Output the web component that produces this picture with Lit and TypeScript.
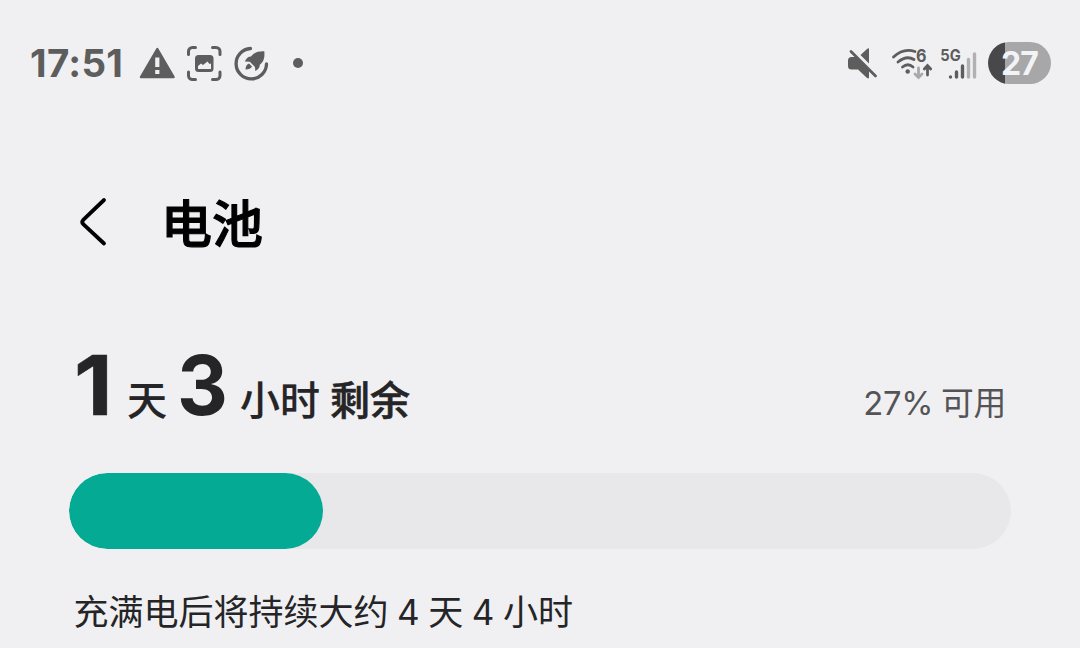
import { LitElement, html, css } from 'lit';
import { customElement, property } from 'lit/decorators.js';

@customElement('status-bar')
export class StatusBar extends LitElement {
    static styles = css`
        :host {
            display: flex;
            align-items: center;
            justify-content: space-between;
            height: 126px;
            padding: 0 29px 0 30px;
            box-sizing: border-box;
            color: #5d5d5e;
        }
        .group {
            display: flex;
            align-items: center;
        }
        .time {
            width: 108px;
            font-size: 38.5px;
            line-height: 46px;
            font-weight: 700;
            letter-spacing: 0.3px;
            white-space: nowrap;
        }
        svg {
            display: block;
            overflow: visible;
        }
        .warning,
        .capture {
            margin-right: 10px;
        }
        .dot {
            width: 10px;
            height: 10px;
            margin-left: 23px;
            border-radius: 50%;
            background: #5d5d5e;
        }
        .mute {
            margin-right: 12px;
        }
        .wifi {
            margin-right: 6px;
        }
        .signal {
            margin-right: 11px;
        }
        .battery {
            width: 63px;
            height: 42px;
            border-radius: 21px;
            background: linear-gradient(90deg, #48484a 27%, #a7a7a9 27%);
            color: #f3f3f5;
            font-size: 32px;
            line-height: 43px;
            font-weight: 700;
            letter-spacing: -0.8px;
            text-align: center;
        }
        text {
            font-family: Inter, sans-serif;
            font-weight: 700;
            fill: currentColor;
        }
    `;

    @property({ type: Number }) level = 0;

    render() {
        return html`
            <div class="group">
                <span class="time">17:51</span>
                <svg class="warning" width="38" height="42" viewBox="138 42 38 42">
                    <path d="M157.3 49L173.6 77H141Z" fill="currentColor" stroke="currentColor" stroke-width="2.4" stroke-linejoin="round"/>
                    <path d="M157.3 57.5v9.5M157.3 70v4" stroke="#f0f0f2" stroke-width="4.2"/>
                </svg>
                <svg class="capture" width="36" height="42" viewBox="186 42 36 42">
                    <path d="M188.5 54.5v-3a4 4 0 0 1 4-4h3M212.5 47.5h3.5a4 4 0 0 1 4 4v3M220 72v3.5a4 4 0 0 1-4 4h-3.5M195.5 79.5h-3a4 4 0 0 1-4-4v-3.5" fill="none" stroke="currentColor" stroke-width="3" stroke-linecap="round"/>
                    <rect x="195" y="55" width="18.5" height="17" rx="3.5" fill="currentColor"/>
                    <path d="M198 69v-3l3-2.5 2 1.5 4.5-3.5 2 2.5 1.5-.5v5.5Z" fill="#f0f0f2"/>
                </svg>
                <svg width="38" height="42" viewBox="232 42 38 42">
                    <path d="M250.5 48.5A15.2 15.2 0 1 0 266.5 64" fill="none" stroke="currentColor" stroke-width="3.3" stroke-linecap="round"/>
                    <path d="M264.3 51.3c-6-.3-10 1.200-13.3 5.200-2.800 0-4.500 1.500-6.200 5l5 .3 5.200 5.200 .3 4c3-1.500 4.500-3.500 4.500-6.200 4.200-3.300 5-7.300 4.500-13.500Z" fill="currentColor"/>
                    <path d="M249 63.5l3 3c-1 2-3 3-6.500 3 0-3.500 1.500-5.500 3.500-6Z" fill="currentColor"/>
                </svg>
                <span class="dot"></span>
            </div>
            <div class="group">
                <svg class="mute" width="32" height="42" viewBox="847 42 32 42">
                    <path d="M869 49v14.5l-8.500-8.500 6-5.500q2.500-2 2.500-.5ZM851.500 57h4.500l13 13v7q0 2.500-2.500.5l-8.500-8h-6.500q-3.500 0-3.500-3.500v-5.500q0-3.500 3.500-3.500Z" fill="currentColor"/>
                    <path d="M851 51.5L875.5 76" stroke="currentColor" stroke-width="2.8" stroke-linecap="round"/>
                </svg>
                <svg class="wifi" width="43" height="42" viewBox="891 42 43 42">
                    <g fill="none" stroke="currentColor" stroke-width="2.8" stroke-linecap="round">
                        <path d="M893.5 57Q903.5 47.500 915 51.500M898 62Q906.500 55 914 59.500M902.500 67Q908 62.500 913 67"/>
                        <path d="M927.5 75v-9M924.3 69l3.200-3.500 3.200 3.500"/>
                        <path d="M918.5 68v9M915 74l3.500 3.500 3.500-3.500" stroke="#a9a9ab"/>
                    </g>
                    <circle cx="907.7" cy="71.5" r="2.2" fill="currentColor"/>
                    <text x="916" y="61.8" font-size="17.5" textLength="10.5" lengthAdjust="spacingAndGlyphs">6</text>
                </svg>
                <svg class="signal" width="37" height="42" viewBox="940 42 37 42">
                    <text x="940.3" y="61" font-size="16.5" textLength="20.5" lengthAdjust="spacingAndGlyphs">5G</text>
                    <g fill="none" stroke="currentColor" stroke-width="3.4" stroke-linecap="round">
                        <path d="M950.5 77v.1M956.5 77v-5M962.5 77v-11"/>
                        <path d="M968.5 77V59.5M974.5 77V54" stroke="#b1b1b3"/>
                    </g>
                </svg>
                <span class="battery">${this.level}</span>
            </div>
        `;
    }
}

@customElement('battery-bar')
export class BatteryBar extends LitElement {
    static styles = css`
        :host {
            display: block;
            height: 76px;
            border-radius: 38px;
            background: #e8e8ea;
            overflow: hidden;
        }
        .fill {
            height: 100%;
            border-radius: 38px;
            background: #05aa95;
        }
    `;

    @property({ type: Number }) level = 0;

    render() {
        return html`<div class="fill" style="width: ${this.level}%"></div>`;
    }
}

@customElement('app-root')
export class AppRoot extends LitElement {
    static styles = css`
        :host {
            display: block;
            height: 648px;
            overflow: hidden;
            background: #f0f0f2;
            color: #252527;
            font-family: Inter, 'Noto Sans CJK SC', sans-serif;
        }
        .header {
            display: flex;
            align-items: center;
            height: 60px;
            padding: 66px 0 0 78px;
        }
        .header svg {
            display: block;
            margin-right: 53px;
        }
        h1 {
            margin: 0;
            padding-top: 6px;
            color: #000;
            font-size: 51px;
            line-height: 60px;
            font-weight: 500;
            -webkit-text-stroke: 1.1px currentColor;
        }
        .summary {
            display: flex;
            align-items: baseline;
            height: 137.5px;
            padding: 83px 74px 0;
            line-height: 100px;
            white-space: nowrap;
        }
        .number {
            font-size: 83px;
            font-weight: 700;
            transform-origin: left;
        }
        .days {
            width: 53px;
            -webkit-text-stroke: 0.6px currentColor;
            transform: scaleX(1.08);
        }
        .hours {
            width: 63px;
            transform: scaleX(0.95);
        }
        .unit {
            font-size: 40px;
            font-weight: 500;
            -webkit-text-stroke: 0.2px currentColor;
        }
        .unit-day {
            width: 50px;
        }
        .unit-hour {
            width: 90px;
        }
        .left {
            font-size: 40px;
            font-weight: 500;
            -webkit-text-stroke: 0.6px currentColor;
        }
        .available {
            margin-left: auto;
            color: #545456;
            font-size: 32.8px;
            word-spacing: -1px;
            letter-spacing: -0.3px;
        }
        battery-bar {
            margin: 0 69px;
        }
        .note {
            margin: 38px 0 0 73.5px;
            font-size: 35px;
            line-height: 50px;
            word-spacing: -1.3px;
            white-space: nowrap;
        }
    `;

    @property({ type: Number }) level = 27;

    render() {
        return html`
            <status-bar .level=${this.level}></status-bar>
            <div class="header">
                <svg width="30" height="52" viewBox="0 0 30 52">
                    <path d="M26 4L5.5 23.5Q3 26 5.5 28.5L26 47.5" fill="none" stroke="#000" stroke-width="3.8" stroke-linecap="round"/>
                </svg>
                <h1>电池</h1>
            </div>
            <div class="summary">
                <span class="number days">1</span>
                <span class="unit unit-day">天</span>
                <span class="number hours">3</span>
                <span class="unit unit-hour">小时</span>
                <span class="left">剩余</span>
                <span class="available">${this.level}% 可用</span>
            </div>
            <battery-bar .level=${this.level}></battery-bar>
            <div class="note">充满电后将持续大约 4 天 4 小时</div>
        `;
    }
}
